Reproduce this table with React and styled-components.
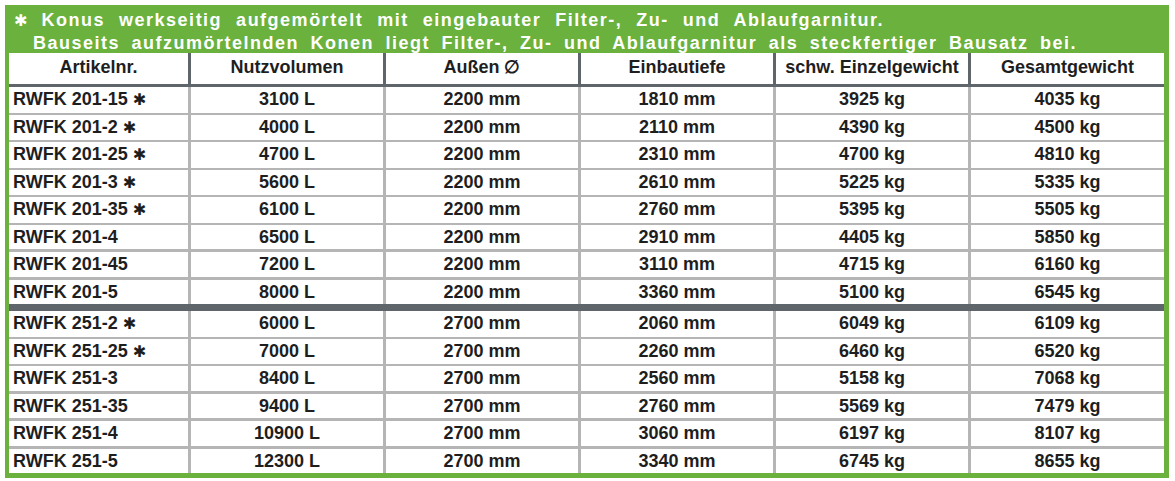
import React from "react";
import styled, { createGlobalStyle } from "styled-components";

const GREEN = "#6ab23d";
const DARK = "#5e656b";
const LIGHT = "#b5b5b5";

const GlobalStyle = createGlobalStyle`
  html, body {
    margin: 0;
    padding: 0;
    background: #ffffff;
  }
  body {
    font-family: "Liberation Sans", Arial, sans-serif;
  }
`;

const Frame = styled.div`
  box-sizing: border-box;
  width: 1164px;
  margin: 5px 0 0 5px;
  padding: 0 5px 5px 4px;
  background: ${GREEN};
`;

const Banner = styled.div`
  box-sizing: border-box;
  height: 48px;
  padding: 4px 0 0 5px;
  color: #ffffff;
  font-weight: bold;
  font-size: 18px;
  line-height: 22px;
  letter-spacing: 1.5px;
  white-space: nowrap;
`;

const BannerLine = styled.div`
  padding-left: ${(p) => (p.$indent ? "19px" : "0")};
  word-spacing: ${(p) => (p.$indent ? "5px" : "7.5px")};
`;

const Star = styled.span`
  font-family: "DejaVu Sans", sans-serif;
  font-size: 0.9em;
  letter-spacing: 0;
  word-spacing: 0;
`;

const Table = styled.div`
  background: #ffffff;
`;

const Row = styled.div`
  display: grid;
  grid-template-columns: 179px 192px 192px 192px 192px 193px;
  column-gap: 3px;
  background: ${(p) => p.$line};
  height: ${(p) => p.$height};
`;

const HeadRow = styled(Row)`
  border-bottom: 3px solid ${DARK};
`;

const Group = styled.div`
  display: flex;
  flex-direction: column;
  row-gap: 3px;
  background: ${LIGHT};
`;

const Separator = styled.div`
  height: 7px;
  background: ${DARK};
`;

const Cell = styled.div`
  background: #ffffff;
  color: #1e1e1e;
  font-weight: bold;
  font-size: 18px;
  line-height: ${(p) => p.$height};
  white-space: nowrap;
  text-align: ${(p) => (p.$left ? "left" : "center")};
  padding-left: ${(p) => (p.$left ? "4px" : "0")};
`;

const columns = [
  "Artikelnr.",
  "Nutzvolumen",
  "Außen ∅",
  "Einbautiefe",
  "schw. Einzelgewicht",
  "Gesamtgewicht",
];

const groups = [
  [
    ["RWFK 201-15", true, "3100 L", "2200 mm", "1810 mm", "3925 kg", "4035 kg"],
    ["RWFK 201-2", true, "4000 L", "2200 mm", "2110 mm", "4390 kg", "4500 kg"],
    ["RWFK 201-25", true, "4700 L", "2200 mm", "2310 mm", "4700 kg", "4810 kg"],
    ["RWFK 201-3", true, "5600 L", "2200 mm", "2610 mm", "5225 kg", "5335 kg"],
    ["RWFK 201-35", true, "6100 L", "2200 mm", "2760 mm", "5395 kg", "5505 kg"],
    ["RWFK 201-4", false, "6500 L", "2200 mm", "2910 mm", "4405 kg", "5850 kg"],
    ["RWFK 201-45", false, "7200 L", "2200 mm", "3110 mm", "4715 kg", "6160 kg"],
    ["RWFK 201-5", false, "8000 L", "2200 mm", "3360 mm", "5100 kg", "6545 kg"],
  ],
  [
    ["RWFK 251-2", true, "6000 L", "2700 mm", "2060 mm", "6049 kg", "6109 kg"],
    ["RWFK 251-25", true, "7000 L", "2700 mm", "2260 mm", "6460 kg", "6520 kg"],
    ["RWFK 251-3", false, "8400 L", "2700 mm", "2560 mm", "5158 kg", "7068 kg"],
    ["RWFK 251-35", false, "9400 L", "2700 mm", "2760 mm", "5569 kg", "7479 kg"],
    ["RWFK 251-4", false, "10900 L", "2700 mm", "3060 mm", "6197 kg", "8107 kg"],
    ["RWFK 251-5", false, "12300 L", "2700 mm", "3340 mm", "6745 kg", "8655 kg"],
  ],
];

const ROW_H = "24.5px";

function DataRow({ row }) {
  const [name, starred, ...values] = row;
  return (
    <Row $line={LIGHT} $height={ROW_H}>
      <Cell $left $height={ROW_H}>
        {name}
        {starred && <> <Star>✱</Star></>}
      </Cell>
      {values.map((v, i) => (
        <Cell key={i} $height={ROW_H}>
          {v}
        </Cell>
      ))}
    </Row>
  );
}

export default function App() {
  return (
    <>
      <GlobalStyle />
      <Frame>
        <Banner>
          <BannerLine>
            <Star>✱</Star> Konus werkseitig aufgemörtelt mit eingebauter
            Filter-, Zu- und Ablaufgarnitur.
          </BannerLine>
          <BannerLine $indent>
            Bauseits aufzumörtelnden Konen liegt Filter-, Zu- und
            Ablaufgarnitur als steckfertiger Bausatz bei.
          </BannerLine>
        </Banner>
        <Table>
          <HeadRow $line={DARK} $height="31px">
            {columns.map((c) => (
              <Cell key={c} $height="28px">
                {c}
              </Cell>
            ))}
          </HeadRow>
          <Group>
            {groups[0].map((r) => (
              <DataRow key={r[0]} row={r} />
            ))}
          </Group>
          <Separator />
          <Group>
            {groups[1].map((r) => (
              <DataRow key={r[0]} row={r} />
            ))}
          </Group>
        </Table>
      </Frame>
    </>
  );
}
